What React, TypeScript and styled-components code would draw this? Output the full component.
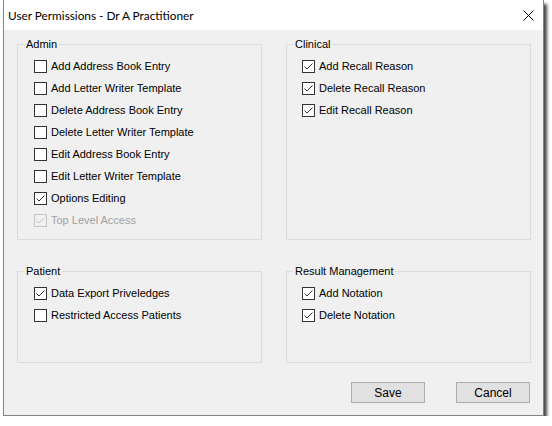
import React from 'react';
import styled, { createGlobalStyle } from 'styled-components';

const GlobalStyle = createGlobalStyle`
  html, body {
    margin: 0;
    background: #fff;
  }
  body {
    font-family: "Liberation Sans", Arial, sans-serif;
    font-size: 11px;
    color: #000;
  }
`;

const Window = styled.div`
  width: 539px;
  margin-left: 3px;
  border: 1px solid #838383;
  border-top: none;
  background: #f0f0f0;
  box-shadow: 3px 4px 3px rgba(0, 0, 0, 0.72);
`;

const TitleBar = styled.div`
  height: 30px;
  background: #fff;
  display: flex;
  align-items: center;
  justify-content: space-between;
  padding: 0 9px 0 4px;
  font-family: "Lato", "Liberation Sans", sans-serif;
  font-size: 11.8px;
`;

const CloseIcon = styled.svg`
  width: 11px;
  height: 11px;
  display: block;
`;

const Body = styled.div`
  padding: 6px 12px 12px 13px;
`;

const Groups = styled.div`
  display: grid;
  grid-template-columns: 245px 245px;
  grid-template-rows: 204px 100px;
  column-gap: 24px;
  row-gap: 23px;
`;

const GroupBox = styled.fieldset`
  margin: 0;
  padding: 3px 0 8px 6px;
  border: 1px solid #dcdcdc;
  box-sizing: border-box;
  min-width: 0;
`;

const Caption = styled.legend`
  padding: 0 2px;
  line-height: 16px;
`;

const OptionList = styled.div<{ $indent: number }>`
  display: flex;
  flex-direction: column;
  padding-left: ${p => p.$indent}px;
`;

const Option = styled.label<{ $disabled?: boolean }>`
  height: 22px;
  display: flex;
  align-items: center;
  gap: 4px;
  color: ${p => (p.$disabled ? '#a0a0a0' : '#000')};
`;

const Box = styled.span<{ $disabled?: boolean }>`
  width: 13px;
  height: 13px;
  box-sizing: border-box;
  border: 1px solid ${p => (p.$disabled ? '#c4c4c4' : '#333')};
  background: ${p => (p.$disabled ? 'transparent' : '#fff')};
  display: flex;
  align-items: center;
  justify-content: center;
  flex: none;
`;

const Buttons = styled.div`
  display: flex;
  justify-content: flex-end;
  gap: 31px;
  margin-top: 19px;
  padding-right: 1px;
`;

const Button = styled.button`
  width: 74px;
  height: 21px;
  box-sizing: border-box;
  padding: 0;
  border: 1px solid #adadad;
  background: #e1e1e1;
  font-family: inherit;
  font-size: 12px;
  color: #000;
`;

type Permission = { label: string; checked?: boolean; disabled?: boolean };

const groups: { title: string; indent: number; items: Permission[] }[] = [
  {
    title: 'Admin',
    indent: 10,
    items: [
      { label: 'Add Address Book Entry' },
      { label: 'Add Letter Writer Template' },
      { label: 'Delete Address Book Entry' },
      { label: 'Delete Letter Writer Template' },
      { label: 'Edit Address Book Entry' },
      { label: 'Edit Letter Writer Template' },
      { label: 'Options Editing', checked: true },
      { label: 'Top Level Access', checked: true, disabled: true },
    ],
  },
  {
    title: 'Clinical',
    indent: 9,
    items: [
      { label: 'Add Recall Reason', checked: true },
      { label: 'Delete Recall Reason', checked: true },
      { label: 'Edit Recall Reason', checked: true },
    ],
  },
  {
    title: 'Patient',
    indent: 10,
    items: [
      { label: 'Data Export Priveledges', checked: true },
      { label: 'Restricted Access Patients' },
    ],
  },
  {
    title: 'Result Management',
    indent: 9,
    items: [
      { label: 'Add Notation', checked: true },
      { label: 'Delete Notation', checked: true },
    ],
  },
];

const CheckBox: React.FC<{ checked?: boolean; disabled?: boolean }> = ({ checked, disabled }) => (
  <Box $disabled={disabled}>
    {checked && (
      <svg width="11" height="11" viewBox="0 0 11 11">
        <polyline
          points="1.5,5.5 4,8 9.5,2.5"
          fill="none"
          stroke={disabled ? '#c4c4c4' : '#333'}
          strokeWidth="1"
        />
      </svg>
    )}
  </Box>
);

export default function App() {
  return (
    <>
      <GlobalStyle />
      <Window>
        <TitleBar>
          <span>User Permissions - Dr A Practitioner</span>
          <CloseIcon viewBox="0 0 11 11">
            <path d="M0.5 0.5 L10.5 10.5 M10.5 0.5 L0.5 10.5" stroke="#000" strokeWidth="1" />
          </CloseIcon>
        </TitleBar>
        <Body>
          <Groups>
            {groups.map(g => (
              <GroupBox key={g.title}>
                <Caption>{g.title}</Caption>
                <OptionList $indent={g.indent}>
                  {g.items.map(item => (
                    <Option key={item.label} $disabled={item.disabled}>
                      <CheckBox checked={item.checked} disabled={item.disabled} />
                      {item.label}
                    </Option>
                  ))}
                </OptionList>
              </GroupBox>
            ))}
          </Groups>
          <Buttons>
            <Button>Save</Button>
            <Button>Cancel</Button>
          </Buttons>
        </Body>
      </Window>
    </>
  );
}
